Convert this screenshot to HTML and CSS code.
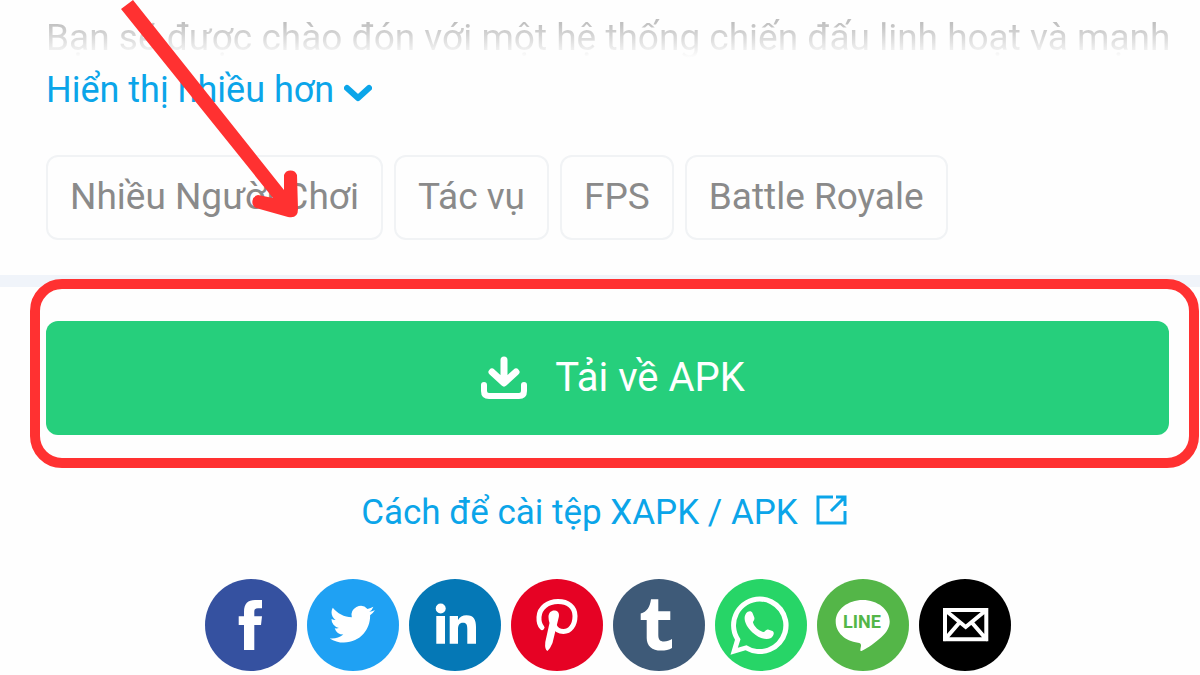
FILE: index.html
```
<!DOCTYPE html>
<html lang="vi">
<head>
<meta charset="utf-8">
<meta name="viewport" content="width=device-width, initial-scale=1">
<title>Tải về APK</title>
<link rel="stylesheet" href="styles.css">
</head>
<body>
<main class="page">
  <section class="about">
    <p class="description">Bạn sẽ được chào đón với một hệ thống chiến đấu linh hoạt và mạnh</p>
    <button class="more" type="button">Hiển thị nhiều hơn
      <svg class="more-icon" viewBox="0 0 28 18" aria-hidden="true"><path d="M3 4L14 14L25 4"/></svg>
    </button>
    <nav class="tags" aria-label="Thể loại">
      <a class="tag" href="#">Nhiều Người Chơi</a>
      <a class="tag" href="#">Tác vụ</a>
      <a class="tag" href="#">FPS</a>
      <a class="tag" href="#">Battle Royale</a>
    </nav>
    <svg class="arrow" viewBox="0 0 180 220" aria-hidden="true"><path d="M1 9L13 0L164 190V175A7 7 0 0 1 177 175L178 209Q178 219 168 217L136 208A7 7 0 0 1 138 195L153 198Z"/></svg>
  </section>

  <section class="download">
    <div class="highlight">
      <button class="download-button" type="button">
        <svg class="download-icon" viewBox="0 0 48 44" aria-hidden="true">
          <path d="M24 4V25M12 16L24 27L36 16" stroke-width="7"/>
          <path d="M17 21H31L24 28Z" stroke-width="3" fill="currentColor"/>
          <path d="M4 29V35Q4 40 9 40H39Q44 40 44 35V29" stroke-width="6"/>
        </svg>
        <span>Tải về APK</span>
      </button>
    </div>
    <a class="guide" href="#">Cách để cài tệp XAPK / APK
      <svg class="guide-icon" viewBox="0 0 32 32" aria-hidden="true"><path d="M17 3H2V29H29V17M15 17L29 3M20 3H29V12"/></svg>
    </a>
    <nav class="share" aria-label="Chia sẻ">
      <a class="share-link facebook" href="#" aria-label="Facebook"><svg viewBox="0 0 92 92"><path d="M39 71V46H33.7V37.3H39V33C39 24.5 43 21 50 21H57V29.3H53C50 29.3 49.3 30.5 49.3 33V37.3H57L56 46H49.3V71Z"/></svg></a>
      <a class="share-link twitter" href="#" aria-label="Twitter"><svg viewBox="0 0 92 92"><path transform="translate(22.7 22.8) scale(1.875)" d="M23.953 4.57a10 10 0 01-2.825.775 4.958 4.958 0 002.163-2.723c-.951.555-2.005.959-3.127 1.184a4.92 4.92 0 00-8.384 4.482C7.69 8.095 4.067 6.13 1.64 3.162a4.822 4.822 0 00-.666 2.475c0 1.71.87 3.213 2.188 4.096a4.904 4.904 0 01-2.228-.616v.06a4.923 4.923 0 003.946 4.827 4.996 4.996 0 01-2.212.085 4.936 4.936 0 004.604 3.417 9.867 9.867 0 01-6.102 2.105c-.39 0-.779-.023-1.17-.067a13.995 13.995 0 007.557 2.209c9.053 0 13.998-7.496 13.998-13.985 0-.21 0-.42-.015-.63A9.935 9.935 0 0024 4.59z"/></svg></a>
      <a class="share-link linkedin" href="#" aria-label="LinkedIn"><svg viewBox="0 0 92 92"><circle cx="31.7" cy="29.5" r="5"/><path d="M27.3 37H36V64.7H27.3ZM40.7 37H49V41C50.5 38 53.5 36.3 57.5 36.3C65 36.3 67 41 67 48V64.7H58.3V50.5C58.3 46.5 57.7 43.8 54 43.8C50.3 43.8 49 46.5 49 50.5V64.7H40.7Z"/></svg></a>
      <a class="share-link pinterest" href="#" aria-label="Pinterest"><svg viewBox="0 0 92 92"><path class="line" stroke-width="5" d="M31 48.5C28.5 46 27.8 42 28 38C28.5 28.5 37 22.5 47 22.5C57 22.5 64 28 64 37C64 46.5 59 52.5 52.5 52.5C48 52.5 45 50.5 43.5 47"/><path d="M37.5 38C37.5 33 41 31 44 31.5C47.5 32 48.5 35 47.8 38L41.5 64Q39.5 69 36.5 72Q33.5 71 34.3 63L38.5 44Q37.5 41 37.5 38Z"/></svg></a>
      <a class="share-link tumblr" href="#" aria-label="Tumblr"><svg viewBox="0 0 92 92"><path d="M38 20.3H45.3V32.3H57.3V41H45.3V56C45.3 60.5 47 62.5 51 62.5C54 62.5 56.5 61.5 59 60V69C56 70.8 52.5 71.6 48 71.6C39 71.6 33.7 67 33.7 59V41H27.7V34.5C34 33 37 28 38 20.3Z"/></svg></a>
      <a class="share-link whatsapp" href="#" aria-label="WhatsApp"><svg viewBox="0 0 92 92"><path fill-rule="evenodd" d="M44.8 17.5A28.8 28.8 0 1 1 30.5 71.3L15.5 75.7L20 60.8A28.8 28.8 0 0 1 44.8 17.5ZM44.8 22.5A23.8 23.8 0 0 0 25.5 60.2L22.8 68.8L31.5 66.2A23.8 23.8 0 1 0 44.8 22.5Z"/><path d="M31 34.5C33 31.5 36.5 31.5 37.5 34L39.3 38.5C40 41 37.8 42 38 43.5C39.5 48 43.5 51.5 48 53C50 53.5 50.5 50.2 53 50.5L57.5 52C60 53.5 58.5 57.5 56 59C51.5 61.5 44 59.5 37.5 53.5C31 47.5 27.5 40 31 34.5Z"/></svg></a>
      <a class="share-link line-app" href="#" aria-label="LINE"><svg viewBox="0 0 92 92"><path d="M45.7 21C60.5 21 72.7 30.5 72.7 42.5C72.7 48.5 69.5 53.5 64.5 58C58.5 63.5 51 69 44.5 72C42.5 72.5 43.8 69 44 66.5C44 64.5 43 64 41 63.7C28 62 18.7 53.5 18.7 42.5C18.7 30.5 31 21 45.7 21Z"/><text x="45" y="49" text-anchor="middle">LINE</text></svg></a>
      <a class="share-link email" href="#" aria-label="Email"><svg viewBox="0 0 92 92"><path class="line" stroke-width="4" d="M26 31H67.3V60.3H26ZM26 31L46.7 48L67.3 31M26 60.3L40.5 43.5M67.3 60.3L52.8 43.5"/></svg></a>
    </nav>
  </section>
</main>
</body>
</html>
```
FILE: styles.css
```
* {
  box-sizing: border-box;
}

body {
  margin: 0;
  background: #fefefe;
  font-family: Roboto, "Noto Sans", sans-serif;
  overflow-x: hidden;
}

button {
  border: 0;
  font: inherit;
  cursor: pointer;
}

a {
  text-decoration: none;
}

.about {
  position: relative;
  display: flex;
  flex-direction: column;
  align-items: flex-start;
  padding: 8px 31px 35px 46px;
}

.description {
  margin: 0;
  font-size: 37px;
  line-height: 60px;
  white-space: nowrap;
  color: transparent;
  background: linear-gradient(#c0c0c0 25%, #fefefe 83%);
  background-clip: text;
}

.more {
  display: flex;
  align-items: center;
  gap: 10px;
  padding: 0;
  background: none;
  color: #0ba5e9;
  font-size: 36px;
  line-height: 44px;
}

.more-icon {
  width: 28px;
  height: 18px;
  margin-top: 6px;
  fill: none;
  stroke: currentColor;
  stroke-width: 6;
  stroke-linecap: round;
  stroke-linejoin: round;
}

.tags {
  display: flex;
  gap: 11px;
  margin-top: 43px;
}

.tag {
  padding: 17px 22px 19px;
  border: 2px solid #f1f3f5;
  border-radius: 12px;
  color: #8a8a8a;
  font-size: 37px;
  line-height: 45px;
  white-space: nowrap;
}

.arrow {
  position: absolute;
  top: 0;
  left: 120px;
  width: 180px;
  height: 220px;
  fill: #ff3131;
}

.download {
  display: flex;
  flex-direction: column;
  align-items: center;
  padding: 34px 31px 5px 46px;
  border-top: 12px solid #f0f4fa;
}

.highlight {
  position: relative;
  width: 100%;
}

.highlight::after {
  content: "";
  position: absolute;
  inset: -42px -30px -33px -16px;
  border: 10px solid #ff3131;
  border-radius: 32px;
  pointer-events: none;
}

.download-button {
  display: flex;
  align-items: center;
  justify-content: center;
  gap: 27px;
  width: 100%;
  padding: 33px 24px 33px 34px;
  border-radius: 12px;
  background: #26cf7c;
  color: #fff;
  font-size: 40px;
  line-height: 48px;
}

.download-icon {
  width: 48px;
  height: 44px;
  fill: none;
  stroke: currentColor;
  stroke-linecap: round;
  stroke-linejoin: round;
}

.guide {
  display: flex;
  align-items: center;
  gap: 18px;
  margin-top: 56px;
  padding-right: 6px;
  color: #0ba5e9;
  font-size: 35px;
  line-height: 44px;
}

.guide-icon {
  width: 32px;
  height: 32px;
  margin-bottom: 6px;
  fill: none;
  stroke: currentColor;
  stroke-width: 3;
}

.share {
  display: flex;
  gap: 10px;
  margin-top: 44px;
}

.share-link {
  width: 92px;
  height: 92px;
  border-radius: 50%;
}

.share-link svg {
  display: block;
  fill: #fff;
}

.share-link .line {
  fill: none;
  stroke: #fff;
  stroke-linecap: round;
}

.share-link text {
  fill: #54b648;
  font-size: 18px;
  font-weight: 700;
}

.facebook { background: #3551a0; }
.twitter { background: #1fa1f3; }
.linkedin { background: #0578b6; }
.pinterest { background: #e60224; }
.tumblr { background: #3e5a78; }
.whatsapp { background: #27d567; }
.line-app { background: #54b648; }
.email { background: #000; }
```
